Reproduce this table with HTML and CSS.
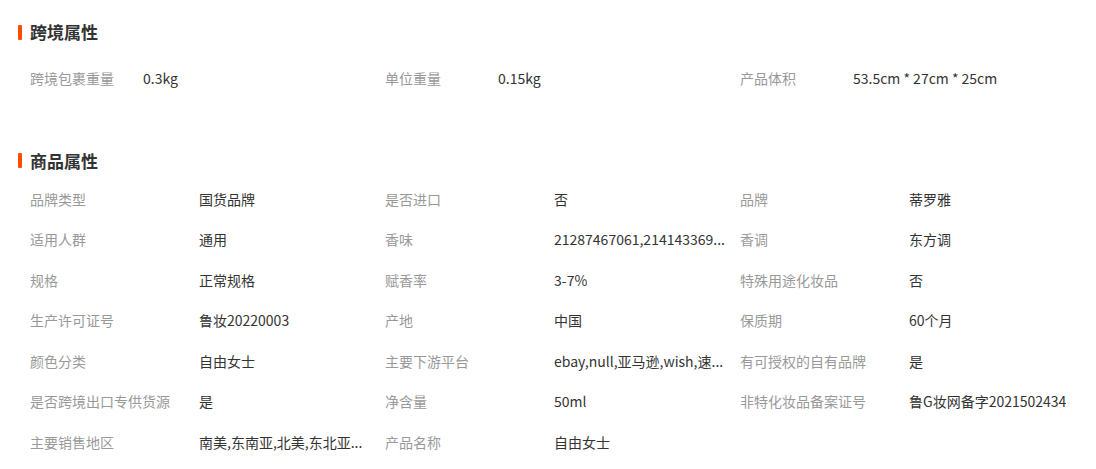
FILE: index.html
```
<!DOCTYPE html>
<html>
    <head>
        <meta charset="UTF-8">
        <title>商品属性</title>
        <link rel="stylesheet" href="styles.css">
    </head>
    <body>
        <div class="attrSection crossBorder">
            <h3 class="attrTitle">跨境属性</h3>
            <div class="attrGrid">
                <div class="attrCell"><span class="attrLabel">跨境包裹重量</span><span class="attrValue">0.3kg</span></div>
                <div class="attrCell"><span class="attrLabel">单位重量</span><span class="attrValue">0.15kg</span></div>
                <div class="attrCell"><span class="attrLabel">产品体积</span><span class="attrValue">53.5cm * 27cm * 25cm</span></div>
            </div>
        </div>

        <div class="attrSection goods">
            <h3 class="attrTitle">商品属性</h3>
            <div class="attrGrid">
                <div class="attrCell"><span class="attrLabel">品牌类型</span><span class="attrValue">国货品牌</span></div>
                <div class="attrCell"><span class="attrLabel">是否进口</span><span class="attrValue">否</span></div>
                <div class="attrCell"><span class="attrLabel">品牌</span><span class="attrValue">蒂罗雅</span></div>

                <div class="attrCell"><span class="attrLabel">适用人群</span><span class="attrValue">通用</span></div>
                <div class="attrCell"><span class="attrLabel">香味</span><span class="attrValue">21287467061,214143369...</span></div>
                <div class="attrCell"><span class="attrLabel">香调</span><span class="attrValue">东方调</span></div>

                <div class="attrCell"><span class="attrLabel">规格</span><span class="attrValue">正常规格</span></div>
                <div class="attrCell"><span class="attrLabel">赋香率</span><span class="attrValue">3-7%</span></div>
                <div class="attrCell"><span class="attrLabel">特殊用途化妆品</span><span class="attrValue">否</span></div>

                <div class="attrCell"><span class="attrLabel">生产许可证号</span><span class="attrValue">鲁妆20220003</span></div>
                <div class="attrCell"><span class="attrLabel">产地</span><span class="attrValue">中国</span></div>
                <div class="attrCell"><span class="attrLabel">保质期</span><span class="attrValue">60个月</span></div>

                <div class="attrCell"><span class="attrLabel">颜色分类</span><span class="attrValue">自由女士</span></div>
                <div class="attrCell"><span class="attrLabel">主要下游平台</span><span class="attrValue">ebay,null,亚马逊,wish,速...</span></div>
                <div class="attrCell"><span class="attrLabel">有可授权的自有品牌</span><span class="attrValue">是</span></div>

                <div class="attrCell"><span class="attrLabel">是否跨境出口专供货源</span><span class="attrValue">是</span></div>
                <div class="attrCell"><span class="attrLabel">净含量</span><span class="attrValue">50ml</span></div>
                <div class="attrCell"><span class="attrLabel">非特化妆品备案证号</span><span class="attrValue">鲁G妆网备字2021502434</span></div>

                <div class="attrCell"><span class="attrLabel">主要销售地区</span><span class="attrValue">南美,东南亚,北美,东北亚...</span></div>
                <div class="attrCell"><span class="attrLabel">产品名称</span><span class="attrValue">自由女士</span></div>
            </div>
        </div>
    </body>
</html>
```
FILE: styles.css
```
* {
    box-sizing: border-box; }

html, body {
    background: #fff;
    margin: 0; padding: 0;
    font-family: "Noto Sans CJK SC", "Liberation Sans", sans-serif;
    font-size: 14px;
    color: #333; }

.attrSection { padding-left: 18px; }
.crossBorder { padding-top: 22px; }
.goods { padding-top: 52px; }

.attrTitle {
    display: flex;
    align-items: center;
    gap: 8px;
    margin: 0;
    height: 20px;
    line-height: 20px;
    font-size: 17px;
    font-weight: bold;
    color: #333; }
.attrTitle::before {
    content: "";
    display: block;
    width: 4px; height: 15px;
    background: #ff4d00;
    border-radius: 1px; }

.attrGrid {
    display: grid;
    grid-template-columns: repeat(3, 355px);
    grid-auto-rows: 40.5px;
    padding-left: 12px; }
.crossBorder .attrGrid { margin-top: 16px; }
.goods .attrGrid { margin-top: 8px; }

.attrCell {
    display: flex;
    align-items: center;
    white-space: nowrap; }
.attrLabel {
    flex: none;
    width: 169px;
    color: #999; }
.crossBorder .attrLabel { width: 113px; }
.attrValue {
    max-width: 180px;
    overflow: hidden;
    text-overflow: ellipsis;
    color: #333; }
.crossBorder .attrValue { max-width: 230px; }
```
